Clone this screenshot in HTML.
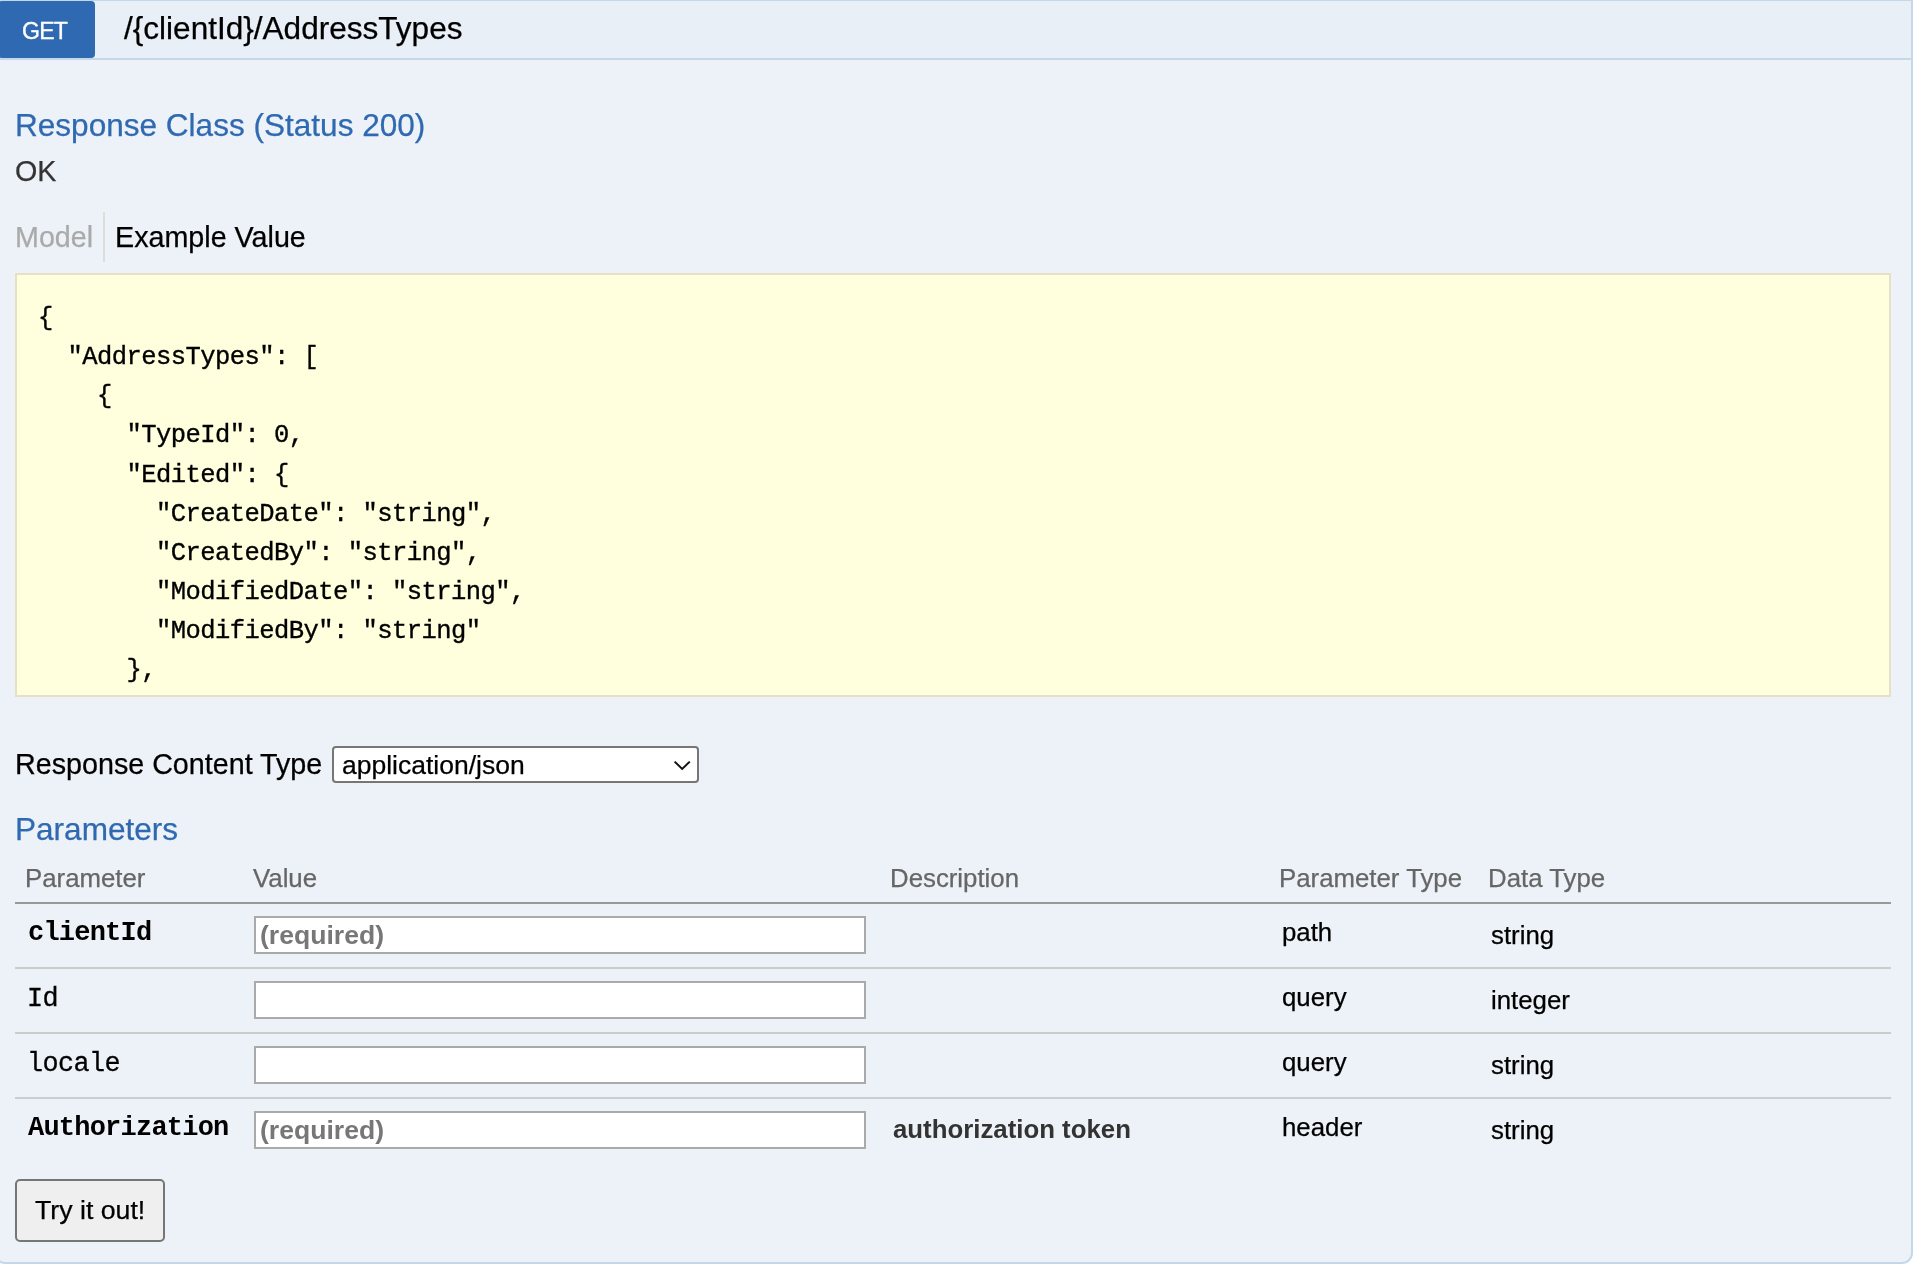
<!DOCTYPE html>
<html>
<head>
<meta charset="utf-8">
<title>Swagger UI</title>
<style>
html,body{margin:0;padding:0;background:#fff;}
body{width:1916px;height:1269px;overflow:hidden;position:relative;font-family:"Liberation Sans",sans-serif;color:#000;}
#wrap{position:absolute;left:0;top:0;width:1916px;height:1269px;will-change:transform;}
.abs{position:absolute;white-space:nowrap;line-height:1;-webkit-text-stroke:0.25px currentColor;}
#heading{position:absolute;left:-6px;top:-1px;width:1915px;height:57px;background:#e8eff6;border:2px solid #c4d8ea;}
#content{position:absolute;left:-6px;top:60px;width:1915px;height:1202px;background:#ecf2f7;border:2px solid #c4d8ea;border-top:none;border-radius:0 0 11px 11px;}
#get{position:absolute;left:-2px;top:1px;width:97px;height:57px;background:#2f69b1;border-radius:4px;}
#gett{left:22px;top:20.4px;font-size:23.1px;letter-spacing:-0.8px;color:#fff;-webkit-text-stroke:0.35px #fff;}
#path{left:124px;top:13px;font-size:31.55px;}
h4{margin:0;font-weight:normal;color:#2f69b1;font-size:31.55px;}
.h4{color:#2f69b1;font-size:31.55px;}
.base{font-size:28.7px;}
#codebox{position:absolute;left:15px;top:273px;width:1872px;height:420px;background:#ffffdd;border:2px solid #e5e0c6;overflow:hidden;}
#codebox pre{margin:0;position:absolute;left:21px;top:24px;font-family:"Liberation Mono",monospace;font-size:25.5px;letter-spacing:-0.55px;line-height:39.15px;color:#000;-webkit-text-stroke:0.35px #000;}
#sel{position:absolute;left:332px;top:746px;width:363px;height:33px;border:2px solid #767676;border-radius:4px;background:#fff;}
.th{font-size:25.8px;color:#666;}
.td{font-size:25.8px;color:#000;}
.mono{font-family:"Liberation Mono",monospace;font-size:26.8px;letter-spacing:-0.58px;-webkit-text-stroke:0.3px #000;}
.monob{font-family:"Liberation Mono",monospace;font-size:27px;letter-spacing:-0.78px;font-weight:bold;-webkit-text-stroke:0;}
.hr{position:absolute;left:15px;width:1876px;}
.inp{position:absolute;left:254px;width:608px;height:34px;border:2px solid #aaa;background:#fff;}
.ph{font-size:26.6px;font-weight:bold;color:#777;-webkit-text-stroke:0;}
#btn{position:absolute;left:15px;top:1179px;width:146px;height:59px;border:2px solid #767676;border-radius:5px;background:#efefef;}
</style>
</head>
<body>
<div id="wrap">
<div id="heading"></div>
<div id="content"></div>
<div id="get"></div><div id="gett" class="abs">GET</div>
<div id="path" class="abs">/{clientId}/AddressTypes</div>

<div class="abs h4" style="left:15px;top:110px;">Response Class (Status 200)</div>
<div class="abs base" style="left:15px;top:157px;color:#333;">OK</div>
<div class="abs base" style="left:15px;top:223px;color:#aaa;">Model</div>
<div style="position:absolute;left:103px;top:212px;width:2px;height:50px;background:#ddd;"></div>
<div class="abs base" style="left:115px;top:223px;">Example Value</div>

<div id="codebox"><pre>{
  "AddressTypes": [
    {
      "TypeId": 0,
      "Edited": {
        "CreateDate": "string",
        "CreatedBy": "string",
        "ModifiedDate": "string",
        "ModifiedBy": "string"
      },</pre></div>

<div class="abs base" style="left:15px;top:750px;">Response Content Type</div>
<div id="sel">
  <div class="abs" style="left:8px;top:4px;font-size:26.5px;">application/json</div>
  <svg style="position:absolute;left:339px;top:12px;" width="20" height="12" viewBox="0 0 20 12"><path d="M1.6 1.6 L9.2 8.9 L16.8 1.6" fill="none" stroke="#111" stroke-width="2"/></svg>
</div>

<div class="abs h4" style="left:15px;top:814px;">Parameters</div>

<div class="abs th" style="left:25px;top:866px;">Parameter</div>
<div class="abs th" style="left:253px;top:866px;">Value</div>
<div class="abs th" style="left:890px;top:866px;">Description</div>
<div class="abs th" style="left:1279px;top:866px;">Parameter Type</div>
<div class="abs th" style="left:1488px;top:866px;">Data Type</div>
<div class="hr" style="top:902px;height:2px;background:#999;"></div>

<div class="abs monob" style="left:28px;top:920px;">clientId</div>
<div class="inp" style="top:916px;"><div class="abs ph" style="left:4px;top:4px;">(required)</div></div>
<div class="abs td" style="left:1282px;top:920px;">path</div>
<div class="abs td" style="left:1491px;top:923px;">string</div>
<div class="hr" style="top:967px;height:2px;background:#ccc;"></div>

<div class="abs mono" style="left:27px;top:986px;">Id</div>
<div class="inp" style="top:981px;"></div>
<div class="abs td" style="left:1282px;top:985px;">query</div>
<div class="abs td" style="left:1491px;top:988px;">integer</div>
<div class="hr" style="top:1032px;height:2px;background:#ccc;"></div>

<div class="abs mono" style="left:27px;top:1051px;">locale</div>
<div class="inp" style="top:1046px;"></div>
<div class="abs td" style="left:1282px;top:1050px;">query</div>
<div class="abs td" style="left:1491px;top:1053px;">string</div>
<div class="hr" style="top:1097px;height:2px;background:#ccc;"></div>

<div class="abs monob" style="left:28px;top:1115px;">Authorization</div>
<div class="inp" style="top:1111px;"><div class="abs ph" style="left:4px;top:4px;">(required)</div></div>
<div class="abs td" style="left:893px;top:1117px;font-weight:bold;color:#333;-webkit-text-stroke:0;">authorization token</div>
<div class="abs td" style="left:1282px;top:1115px;">header</div>
<div class="abs td" style="left:1491px;top:1118px;">string</div>

<div id="btn"><div class="abs" style="left:18px;top:16px;font-size:26.7px;">Try it out!</div></div>
</div>
</body>
</html>
